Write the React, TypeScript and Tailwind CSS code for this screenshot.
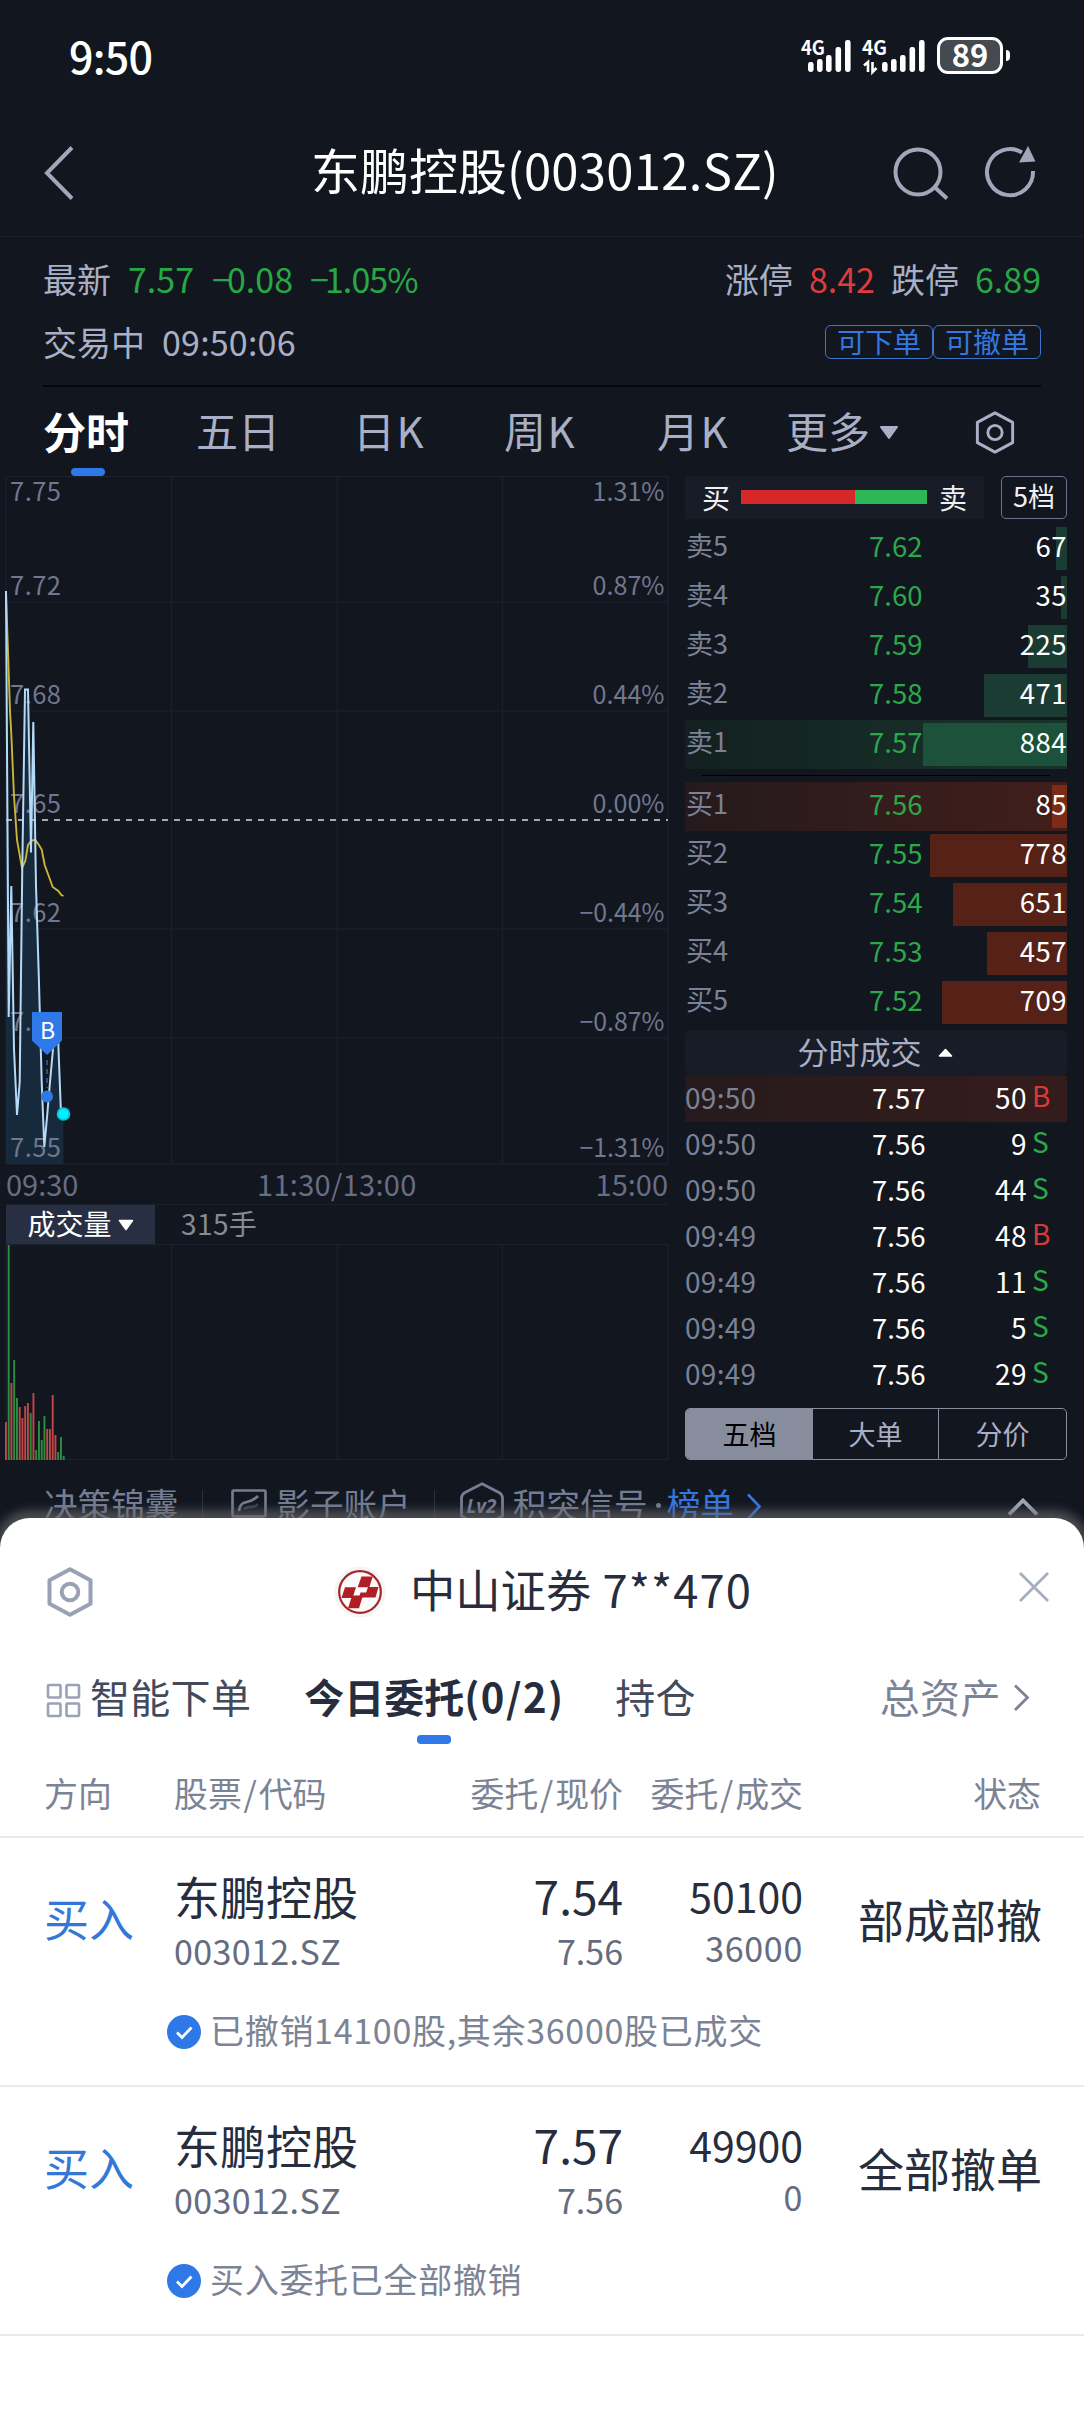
import React from "react";

const FONT = "font-['Noto_Sans_CJK_SC','Noto_Sans',sans-serif]";

const priceLabels = [
  { y: 25, p: "7.75", c: "1.31%" },
  { y: 119, p: "7.72", c: "0.87%" },
  { y: 228, p: "7.68", c: "0.44%" },
  { y: 337, p: "7.65", c: "0.00%" },
  { y: 446, p: "7.62", c: "−0.44%" },
  { y: 555, p: "7.58", c: "−0.87%" },
  { y: 681, p: "7.55", c: "−1.31%" },
];

const pricePoints =
  "6,115 8.7,541 11.3,410 14,573 17,639 19.7,606 22.3,390 25,213.5 28,213.5 31,376.5 33.3,246 36,410 39,507 41.7,606 44.3,671 47.3,638 50,606 53,573 55,539 57.5,539 58.5,573 61,638 63.5,638";

const avgPoints =
  "6,115 7.3,155 10,235 11.3,258 14,320 17,364 22,392 25.3,385 28,369 31,365 35,363.6 38.3,368 41.7,373.5 44.7,389 52.7,411 58.3,415 61.3,419 63.5,420";

const volumes: [number, string][] = [
  [38, "r"], [215, "g"], [77, "r"], [100, "g"], [62, "g"], [53, "r"], [42, "r"], [54, "r"],
  [57, "r"], [47, "g"], [67, "r"], [10, "g"], [39, "g"], [20, "g"], [44, "g"], [31, "r"],
  [31, "r"], [65, "r"], [25, "r"], [8, "g"], [23, "g"], [4, "g"],
];

const asks = [
  { n: "卖5", p: "7.62", v: "67", w: 11 },
  { n: "卖4", p: "7.60", v: "35", w: 6 },
  { n: "卖3", p: "7.59", v: "225", w: 39 },
  { n: "卖2", p: "7.58", v: "471", w: 83 },
  { n: "卖1", p: "7.57", v: "884", w: 144 },
];

const bids = [
  { n: "买1", p: "7.56", v: "85", w: 15 },
  { n: "买2", p: "7.55", v: "778", w: 137 },
  { n: "买3", p: "7.54", v: "651", w: 114 },
  { n: "买4", p: "7.53", v: "457", w: 80 },
  { n: "买5", p: "7.52", v: "709", w: 125 },
];

const trades = [
  ["09:50", "7.57", "50", "B"],
  ["09:50", "7.56", "9", "S"],
  ["09:50", "7.56", "44", "S"],
  ["09:49", "7.56", "48", "B"],
  ["09:49", "7.56", "11", "S"],
  ["09:49", "7.56", "5", "S"],
  ["09:49", "7.56", "29", "S"],
  ["09:49", "", "", "S"],
];

const orders = [
  { price: "7.54", qty: "50100", filled: "36000", status: "部成部撤", note: "已撤销14100股,其余36000股已成交" },
  { price: "7.57", qty: "49900", filled: "0", status: "全部撤单", note: "买入委托已全部撤销" },
];

function HexIcon({ className, sw }: { className: string; sw: number }) {
  return (
    <svg viewBox="0 0 46 50" className={className} fill="none" stroke="currentColor" strokeWidth={sw} strokeLinejoin="round">
      <path d="M23 2.2 L43.5 13.2 V36.8 L23 47.8 L2.5 36.8 V13.2 Z" />
      <circle cx="23" cy="25" r="8.3" />
    </svg>
  );
}

function Signal({ bars }: { bars: number[][] }) {
  return (
    <>
      {bars.map(([x, h]) => (
        <rect key={x} x={x} y={34 - h} width="5.6" height={h} rx="2.4" fill="#fff" />
      ))}
    </>
  );
}

function StatusBar() {
  return (
    <div className="flex h-[114px] items-start justify-between pr-[74px] pl-[69px] text-white">
      <div className="pt-[33px] text-[43px] leading-[44px] font-medium tracking-[-0.8px]">9:50</div>
      <div className="flex items-start pt-[37px]">
        <svg width="134" height="38" viewBox="0 0 134 38" className="mt-px">
          <text x="0" y="17" fontSize="19.5" fontWeight="700" fill="#fff" textLength="24" lengthAdjust="spacingAndGlyphs">4G</text>
          <Signal bars={[[7, 10], [16, 13], [25, 17], [34.5, 25], [44, 32]]} />
          <text x="61" y="17" fontSize="19.5" fontWeight="700" fill="#fff" textLength="25" lengthAdjust="spacingAndGlyphs">4G</text>
          <path d="M63 27.500 L67 24 V34 M71.500 24 V34 L75.500 30" fill="none" stroke="#fff" strokeWidth="2.6" />
          <Signal bars={[[81, 10], [90, 13], [99, 17], [108.5, 25], [118, 32]]} />
        </svg>
        <div className="ml-[2px] flex h-[37px] w-[66px] items-center justify-center rounded-[11px] border-[3px] border-white bg-[#454950]">
          <span className="pb-[4px] text-[31px] leading-[30px] font-bold">89</span>
        </div>
        <div className="mt-[13px] ml-[3px] h-[11px] w-[4px] rounded-r-full bg-white" />
      </div>
    </div>
  );
}

function Header() {
  return (
    <div className="flex h-[123px] items-center border-b border-[#1b202b] pl-[44px]">
      <svg width="30" height="54" viewBox="0 0 30 54" fill="none" stroke="#a0a7ba" strokeWidth="4" className="-mt-[5px]">
        <path d="M28 1.5 L3 27 L28 52.5" />
      </svg>
      <h1 className="ml-[237px] w-[562px] pb-[12px] text-[49px] leading-[60px] font-normal whitespace-nowrap text-white">
        东鹏控股<span className="tracking-[0.3px]">(003012.SZ)</span>
      </h1>
      <svg width="145" height="56" viewBox="0 0 145 56" fill="none" stroke="#a0a7ba" strokeWidth="4" className="-mt-[5px] ml-[18px] shrink-0">
        <circle cx="27" cy="27" r="22.500" />
        <path d="M43.500 42 L56 53.500" />
        <path d="M142 26 A23 23 0 1 1 131 7.500" />
        <path d="M137 1 L144.500 16.500 L128 17.500 Z" fill="#a0a7ba" stroke="none" />
      </svg>
    </div>
  );
}

function Minus() {
  return <span className="tracking-[-4px]">−</span>;
}

function Info() {
  return (
    <div className="mx-[43px] h-[150px] border-b-2 border-[#04060a] pt-[12px] text-[34px] leading-[34px] text-[#a9afc4]">
      <div className="flex h-[62px] items-center justify-between pb-[3px]">
        <div className="flex">
          <span>最新</span>
          <span className="ml-[17px] text-[#27a844]">7.57</span>
          <span className="ml-[18px] text-[#27a844]"><Minus />0.08</span>
          <span className="ml-[17px] tracking-[-0.9px] text-[#27a844]"><Minus />1.05%</span>
        </div>
        <div className="flex">
          <span>涨停</span>
          <span className="ml-[16px] text-[#dc3c3c]">8.42</span>
          <span className="ml-[16px]">跌停</span>
          <span className="ml-[16px] text-[#27a844]">6.89</span>
        </div>
      </div>
      <div className="flex h-[62px] items-center justify-between">
        <div className="flex pb-[1px]">
          <span>交易中</span>
          <span className="ml-[17px] tracking-[0.2px]">09:50:06</span>
        </div>
        <div className="flex text-[28px] leading-[28px] text-[#3377e0]">
          {["可下单", "可撤单"].map((t) => (
            <span key={t} className="flex h-[34px] w-[108px] items-center justify-center rounded-[6px] border border-[#3b74c8] pb-[3px]">{t}</span>
          ))}
        </div>
      </div>
    </div>
  );
}

function Tabs() {
  return (
    <div className="flex h-[89px] items-center pb-[4px] pl-[43px] text-[42px] leading-[48px] text-[#a9afc4]">
      <div className="relative w-[153px] text-[43px] font-bold text-white">
        分时
        <span className="absolute top-[62px] left-[28px] h-[8px] w-[34px] rounded-[4px] bg-[#2f78e8]" />
      </div>
      <div className="w-[157px]">五日</div>
      <div className="w-[151px] tracking-[1.5px]">日K</div>
      <div className="w-[153px] tracking-[1.5px]">周K</div>
      <div className="w-[129px] tracking-[1.5px]">月K</div>
      <div className="flex w-[190px] items-center">
        更多
        <svg width="20" height="14" viewBox="0 0 20 14" className="mt-[7px] ml-[9px]"><path d="M2 1 H18 L10 12 Z" fill="#a9afc4" stroke="#a9afc4" strokeWidth="2" strokeLinejoin="round" /></svg>
      </div>
      <HexIcon className="mt-[6px] -ml-px h-[43px] w-[40px]" sw={3.4} />
    </div>
  );
}

function PriceChart() {
  const grid = "#1a202c";
  return (
    <svg width="680" height="689" viewBox="0 0 680 689" className="block">
      <g stroke={grid} strokeWidth="1.3" fill="none">
        {[0.7, 126, 235, 453, 562, 688].map((y) => <path key={y} d={`M6 ${y} H668`} />)}
        {[6, 171.5, 337, 502.5, 668].map((x) => <path key={x} d={`M${x} 0 V688`} />)}
      </g>
      <polygon points={`${pricePoints} 63.5,688 6,688`} fill="#1a3145" fillOpacity="0.75" />
      <g fontSize="25.5" fill="#70778e">
        {priceLabels.map((l) => (
          <React.Fragment key={l.p}>
            <text x="10" y={l.y} textLength="51">{l.p}</text>
            {l.c.startsWith("−") ? (
              <text x="579.500" y={l.y} textLength="85" lengthAdjust="spacingAndGlyphs">{l.c}</text>
            ) : (
              <text x="592.500" y={l.y} textLength="72" lengthAdjust="spacingAndGlyphs">{l.c}</text>
            )}
          </React.Fragment>
        ))}
      </g>
      <polyline points={avgPoints} fill="none" stroke="#c9b535" strokeWidth="1.9" />
      <path d="M6 344 H668" stroke="#a3a9b8" strokeWidth="1.8" strokeDasharray="6 6" />
      <polyline points={pricePoints} fill="none" stroke="#b5daf8" strokeWidth="2" />
      <path d="M32 536 H62 V564.500 L47 579 L32 564.500 Z" fill="#2f78e8" />
      <text x="47.500" y="563" fontSize="23" textAnchor="middle" fill="#fff">B</text>
      <path d="M47 584 V612" stroke="#2c5fae" strokeWidth="1.6" strokeDasharray="5 4" />
      <circle cx="47" cy="620.500" r="6" fill="#2f78e8" />
      <circle cx="63.500" cy="638" r="6.800" fill="#00c8e0" />
      <circle cx="63.500" cy="638" r="5" fill="#00f0ff" />
    </svg>
  );
}

function VolumeChart() {
  return (
    <svg width="680" height="216" viewBox="0 0 680 216" className="block">
      <g stroke="#1a202c" strokeWidth="1.3">
        <path d="M6 0.500 H668 M6 215.500 H668" />
        {[6, 171.5, 337, 502.5, 668].map((x) => <path key={x} d={`M${x} 0 V216`} />)}
      </g>
      {volumes.map(([h, c], i) => (
        <rect key={i} x={5 + i * 2.75} y={216 - h} width="1.9" height={h} fill={c === "r" ? "#c04848" : "#2b8f43"} />
      ))}
    </svg>
  );
}

function ChartColumn() {
  return (
    <div className="w-[685px]">
      <PriceChart />
      <div className="flex h-[39px] w-[668px] items-center pb-[4px] pl-[6px] text-[29px] leading-[30px] text-[#666d84]">
        <span className="w-[251px]">09:30</span>
        <span className="flex-1 tracking-[0.3px]">11:30/13:00</span>
        <span>15:00</span>
      </div>
      <div className="ml-[6px] flex h-[40px] w-[662px] items-center border-t border-[#1a202c] text-[28px] leading-[28px]">
        <div className="flex h-[40px] w-[149px] items-center justify-center bg-[#292f43] text-white">
          <span className="pb-[3px]">成交量</span>
          <svg width="16" height="12" viewBox="0 0 16 12" className="mt-[1px] ml-[6px]"><path d="M1.500 1.500 H14.500 L8 10.500 Z" fill="#fff" stroke="#fff" strokeWidth="1.600" strokeLinejoin="round" /></svg>
        </div>
        <span className="ml-[26px] pb-[4px] tracking-[0.4px] text-[#868b95]">315手</span>
      </div>
      <VolumeChart />
    </div>
  );
}

function BookRow({ n, p, v, w, side, best }: { n: string; p: string; v: string; w: number; side: "ask" | "bid"; best: boolean }) {
  const ask = side === "ask";
  const rowBg = !best ? "" : ask ? "bg-linear-to-r from-[#12211f] to-[#1a332d]" : "bg-linear-to-r from-[#241a1d] to-[#421e1a]";
  const barBg = best ? (ask ? "bg-[#1c513c]" : "bg-[#7b2b16]") : ask ? "bg-[#1a3c33]" : "bg-[#562117]";
  return (
    <div className={`relative flex h-[49px] items-center text-[27.5px] leading-[28px] ${rowBg}`}>
      <div className={`absolute top-[3px] right-0 h-[43px] ${barBg}`} style={{ width: w }} />
      <span className="w-[184px] pb-[7px] pl-px text-[27px] text-[#7b8296]">{n}</span>
      <span className="w-[90px] pb-[7px] text-[#2ba84a]">{p}</span>
      <span className="relative flex-1 pb-[7px] text-right tracking-[0.5px] text-white">{v}</span>
    </div>
  );
}

function OrderBook() {
  return (
    <div className="flex h-[984px] w-[382px] flex-col">
      <div className="flex h-[43px] shrink-0 justify-between text-[28px] leading-[28px] text-[#eef0f4]">
        <div className="flex w-[299px] items-center bg-[#171c27] pl-[17px]">
          <span className="pb-[2px]">买</span>
          <div className="-mt-[2px] ml-[11px] h-[14px] w-[114px] bg-[#d62828]" />
          <div className="-mt-[2px] h-[14px] w-[72px] bg-[#2db757]" />
          <span className="ml-[12px] pb-[2px]">卖</span>
        </div>
        <div className="flex w-[66px] items-center justify-center rounded-[5px] border border-[#6d7390] pb-[3px] text-[27px]">5档</div>
      </div>
      <div className="pt-[5px]">
        {asks.map((a) => <BookRow key={a.n} {...a} side="ask" best={a.n === "卖1"} />)}
      </div>
      <div className="mx-[17px] my-[6px] h-[1px] shrink-0 bg-black" />
      <div>
        {bids.map((b) => <BookRow key={b.n} {...b} side="bid" best={b.n === "买1"} />)}
      </div>
      <div className="mt-auto flex h-[46.500px] shrink-0 items-center justify-center rounded-[5px] bg-[#171c27] text-[31px] leading-[31px] text-[#a9afc4]">
        <span className="pb-[4px]">分时成交</span>
        <svg width="15" height="10" viewBox="0 0 15 10" className="mr-[2px] ml-[16px]"><path d="M7.500 1.500 L13.500 8 H1.500 Z" fill="#fff" stroke="#fff" strokeWidth="1.600" strokeLinejoin="round" /></svg>
      </div>
      <div className="h-[332px] shrink-0 overflow-hidden text-[28px] leading-[28px]">
        {trades.map(([t, p, q, s], i) => (
          <div key={i} className={i === 0 ? "flex h-[46px] items-center bg-linear-to-r from-[#261a1d] to-[#351c1c]" : "flex h-[46px] items-center"}>
            <span className="w-[187px] pb-[5px] tracking-[0.3px] text-[#7b8296]">{t}</span>
            <span className="w-[80px] pb-[5px] text-[27.500px] text-white">{p}</span>
            <span className="w-[75px] pb-[5px] text-right tracking-[0.500px] text-white">{q}</span>
            <span className={s === "B" ? "ml-[5px] pb-[9px] text-[#d83a3a]" : "ml-[5px] pb-[9px] text-[#2ba84a]"}>{s}</span>
          </div>
        ))}
      </div>
      <div className="flex h-[52px] shrink-0 overflow-hidden rounded-[5px] border border-[#878d9d] text-[27px] leading-[27px] text-[#a9afc4]">
        <div className="flex w-[127px] items-center justify-center bg-[#878d9d] pb-[2px] text-black">五档</div>
        <div className="flex w-[126px] items-center justify-center border-r border-[#878d9d] pb-[2px]">大单</div>
        <div className="flex flex-1 items-center justify-center pb-[2px]">分价</div>
      </div>
    </div>
  );
}

function ToolStrip() {
  return (
    <div className="flex h-[58px] items-start overflow-hidden pt-[26px] pl-[44px] text-[33.600px] leading-[36px] whitespace-nowrap text-[#757d92]">
      <span>决策锦囊</span>
      <span className="mt-[4px] ml-[24px] h-[36px] w-px bg-[#2b3140]" />
      <svg width="36" height="34" viewBox="0 0 36 34" fill="none" stroke="#757d92" strokeWidth="2.600" className="mt-[3px] ml-[28px]">
        <rect x="1.500" y="1.500" width="33" height="26" rx="1" />
        <path d="M8 22 C10 9 17 17 27 7" />
        <path d="M13 20 C18 15 22 21 27 15" strokeOpacity="0.4" />
      </svg>
      <span className="ml-[9px]">影子账户</span>
      <span className="mt-[4px] ml-[23px] h-[36px] w-px bg-[#2b3140]" />
      <svg width="44" height="50" viewBox="0 0 44 50" fill="none" stroke="#757d92" strokeWidth="2.800" className="-mt-[4px] ml-[25px]">
        <path d="M22 1.800 L39 10.500 Q42.500 12.500 42.500 16 V34 L22 46 L1.500 34 V16 Q1.500 12.500 5 10.500 Z" />
        <text x="21.500" y="31" fontSize="19" fontWeight="700" fontStyle="italic" textAnchor="middle" fill="#757d92" stroke="none" fontFamily="Open Sans">Lv2</text>
      </svg>
      <span className="ml-[9px] tracking-[0.2px]">积突信号</span>
      <span className="mt-[17px] ml-[8px] h-[5px] w-[5px] rounded-full bg-[#757d92]" />
      <span className="ml-[6px] text-[#3377e0]">榜单</span>
      <svg width="16" height="28" viewBox="0 0 16 28" fill="none" stroke="#3377e0" strokeWidth="2.600" className="mt-[7px] ml-[12px]"><path d="M2 1.500 L13.500 13.500 L2 26" /></svg>
      <svg width="32" height="18" viewBox="0 0 32 18" fill="none" stroke="#a0a7ba" strokeWidth="3.800" className="mt-[12px] ml-[245px]"><path d="M2 16.500 L16 2.500 L30 16.500" /></svg>
    </div>
  );
}

function BrokerLogo() {
  return (
    <svg width="52" height="52" viewBox="-26 -26 52 52" className="shrink-0">
      <circle r="25.500" fill="#f6f4f5" />
      <circle r="20.800" fill="#fcfafa" stroke="#a3262b" strokeWidth="2.200" />
      <g fill="#b01f24">
        <path d="M1.500 -15.500 H12.700 L9.300 -4.700 H-2.300 Z" />
        <path d="M8 -5 H18.500 L15.500 5.500 H-1 L0.500 0.500 H6.200 Z" />
        <path d="M-15 -4.700 H-4 L-7.500 6 H-18.500 Z" />
        <path d="M-7.500 3.500 H3 L-1 16.300 H-12 L-8.700 6 Z" />
      </g>
    </svg>
  );
}

function Check() {
  return (
    <svg width="34" height="34" viewBox="0 0 34 34" className="shrink-0">
      <circle cx="17" cy="17" r="17" fill="#2f78e8" />
      <path d="M10 17.500 L15 22.500 L24.500 12.500" fill="none" stroke="#fff" strokeWidth="2.800" />
    </svg>
  );
}

function Pair({ a, b }: { a: string; b: string }) {
  return (
    <>
      {a}
      <span className="mx-[1.8px]">/</span>
      {b}
    </>
  );
}

function Sheet() {
  return (
    <div className="relative h-[894px] rounded-t-[30px] bg-white text-[#272d3d] shadow-[0_-3px_10px_5px_rgba(105,105,108,0.65)]">
      <div className="flex h-[148px] items-center pl-[46px]">
        <HexIcon className="h-[50px] w-[48px] text-[#99a1b4]" sw={4} />
        <div className="ml-[240px]"><BrokerLogo /></div>
        <div className="ml-[24px] w-[600px] pb-[8px] text-[45.300px] leading-[50px] whitespace-nowrap">
          中山证券<span className="tracking-[1.1px]"> 7**470</span>
        </div>
        <svg width="30" height="30" viewBox="0 0 30 30" fill="none" stroke="#a5adc0" strokeWidth="2.800" className="-mt-[10px] ml-[9px] shrink-0"><path d="M1 1 L29 29 M29 1 L1 29" /></svg>
      </div>
      <div className="flex h-[94px] items-start pl-[46px] text-[40px] leading-[48px] text-[#434a5c]">
        <svg width="35" height="35" viewBox="0 0 35 35" fill="none" stroke="#9aa2b5" strokeWidth="2.600" className="mt-[17px]">
          <rect x="2" y="2" width="12.500" height="12.500" rx="1" />
          <rect x="20.500" y="2" width="12.500" height="12.500" rx="1" />
          <rect x="2" y="20.500" width="12.500" height="12.500" rx="1" />
          <rect x="20.500" y="20.500" width="12.500" height="12.500" rx="1" />
        </svg>
        <span className="mt-[6px] ml-[9px] tracking-[0.3px]">智能下单</span>
        <div className="relative mt-[6px] ml-[53px] w-[258px] font-bold whitespace-nowrap text-[#272d3d]">
          今日委托<span className="tracking-[1.5px]">(0/2)</span>
          <span className="absolute top-[63px] left-[113px] h-[9px] w-[34px] rounded-[4px] bg-[#2f78e8]" />
        </div>
        <span className="mt-[6px] ml-[53px] tracking-[0.3px]">持仓</span>
        <span className="mt-[6px] ml-[184px] tracking-[0.3px] text-[#7b8395]">总资产</span>
        <svg width="17" height="28" viewBox="0 0 17 28" fill="none" stroke="#7b8395" strokeWidth="2.800" className="mt-[18px] ml-[12px]"><path d="M2 1.500 L14.500 13.500 L2 26" /></svg>
      </div>
      <div className="flex h-[78px] items-center border-b-2 border-[#e9eaec] pr-[43px] pl-[44px] text-[33.900px] leading-[36px] text-[#7b8395]">
        <span className="w-[130px] pb-[10px]">方向</span>
        <span className="w-[199px] pb-[10px]"><Pair a="股票" b="代码" /></span>
        <span className="w-[250px] pb-[10px] text-right"><Pair a="委托" b="现价" /></span>
        <span className="w-[180px] pb-[10px] text-right"><Pair a="委托" b="成交" /></span>
        <span className="flex-1 pb-[10px] text-right">状态</span>
      </div>
      {orders.map((o) => (
        <div key={o.status} className="h-[249px] border-b-2 border-[#e9eaec]">
          <div className="flex h-[166px] items-center pr-[42px] pb-[3px] pl-[44px] text-[46px] leading-[46px]">
            <span className="w-[130px] pb-[3px] text-[45px] text-[#3377d8]">买入</span>
            <div className="flex w-[199px] flex-col">
              <span className="whitespace-nowrap">东鹏控股</span>
              <span className="mt-[16px] text-[34px] leading-[34px] tracking-[0.400px] text-[#656c80]">003012.SZ</span>
            </div>
            <div className="flex w-[250px] flex-col text-right">
              <span>{o.price}</span>
              <span className="mt-[16px] text-[34px] leading-[34px] text-[#656c80]">7.56</span>
            </div>
            <div className="flex w-[180px] flex-col text-right">
              <span className="text-[41px]">{o.qty}</span>
              <span className="mt-[13px] pb-[3px] text-[34px] leading-[34px] tracking-[0.700px] text-[#656c80]">{o.filled}</span>
            </div>
            <span className="flex-1 pb-[3px] text-right whitespace-nowrap">{o.status}</span>
          </div>
          <div className="flex items-center pt-[9px] pl-[167px]">
            <Check />
            <span className="ml-[9px] pb-[4px] text-[34px] leading-[34px] tracking-[0.700px] text-[#7b8395]">{o.note}</span>
          </div>
        </div>
      ))}
    </div>
  );
}

export default function App() {
  return (
    <div lang="zh-CN" className={`h-[2412px] w-[1084px] overflow-hidden bg-[#12161f] ${FONT}`}>
      <StatusBar />
      <Header />
      <Info />
      <Tabs />
      <div className="flex h-[984px]">
        <ChartColumn />
        <OrderBook />
      </div>
      <ToolStrip />
      <Sheet />
    </div>
  );
}
